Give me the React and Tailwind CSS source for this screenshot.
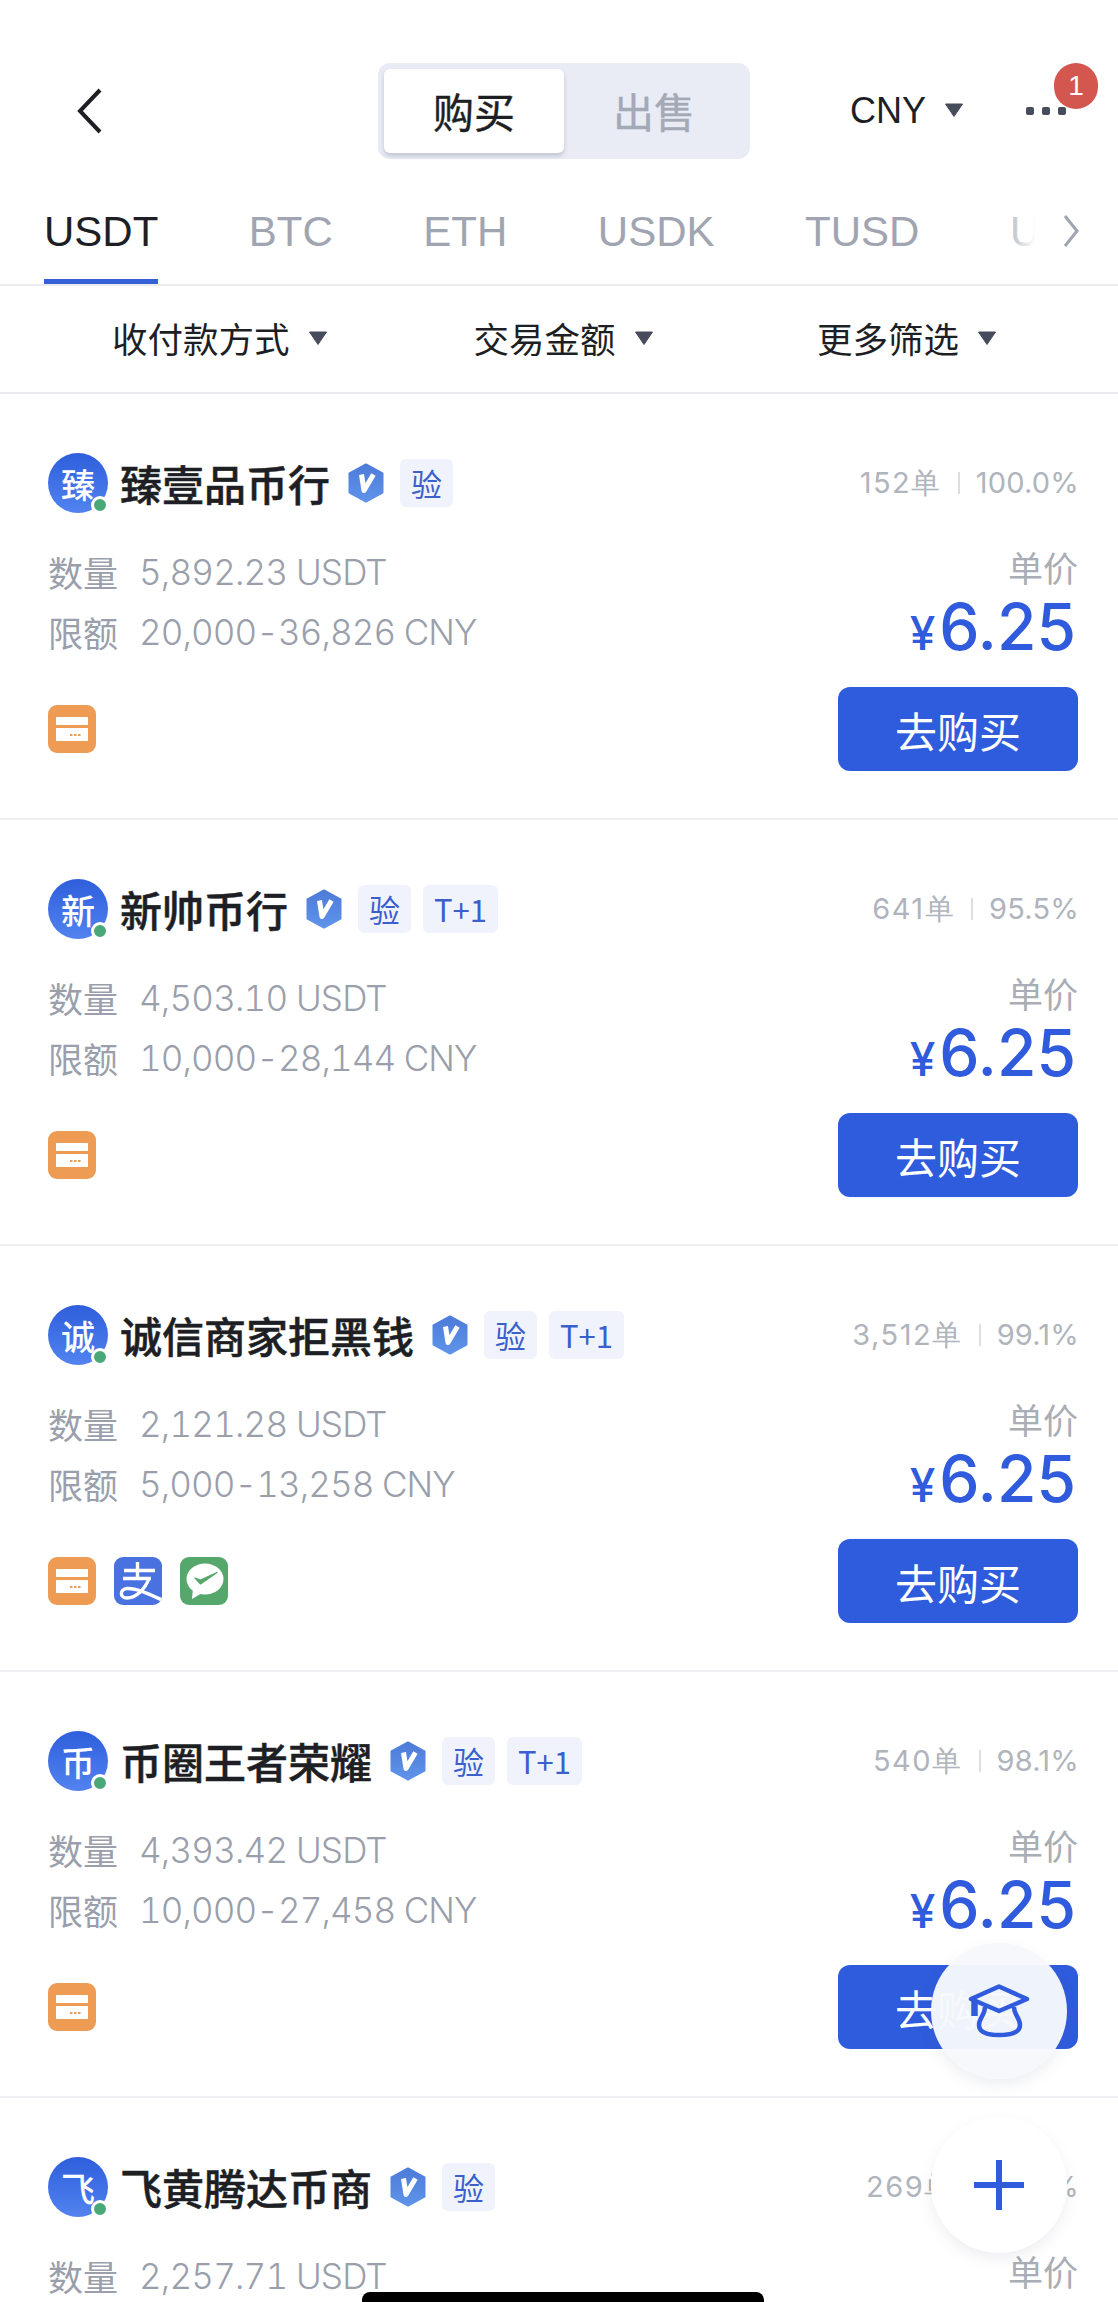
import React from 'react';

const merchants = [
  { name: '臻壹品币行', orders: '152单', rate: '100.0%', qty: '5,892.23 USDT', limit: '20,000-36,826 CNY', tags: ['验'], pays: ['bank'] },
  { name: '新帅币行', orders: '641单', rate: '95.5%', qty: '4,503.10 USDT', limit: '10,000-28,144 CNY', tags: ['验', 'T+1'], pays: ['bank'] },
  { name: '诚信商家拒黑钱', orders: '3,512单', rate: '99.1%', qty: '2,121.28 USDT', limit: '5,000-13,258 CNY', tags: ['验', 'T+1'], pays: ['bank', 'alipay', 'wechat'] },
  { name: '币圈王者荣耀', orders: '540单', rate: '98.1%', qty: '4,393.42 USDT', limit: '10,000-27,458 CNY', tags: ['验', 'T+1'], pays: ['bank'] },
  { name: '飞黄腾达币商', orders: '269单', rate: '99.6%', qty: '2,257.71 USDT', limit: '5,000-14,110 CNY', tags: ['验'], pays: ['bank'] },
];

const Caret = () => (
  <svg width="20" height="14" viewBox="0 0 20 14" className="shrink-0">
    <path d="M1.5 1h17L10 13.5z" fill="#474c5c" stroke="#474c5c" strokeWidth="1" strokeLinejoin="round" />
  </svg>
);

const VBadge = () => (
  <svg width="36" height="40" viewBox="0 0 36 40" className="shrink-0">
    <defs>
      <linearGradient id="vb" x1="0" y1="0" x2="0" y2="1">
        <stop offset="0" stopColor="#4d7bd9" />
        <stop offset="1" stopColor="#5f94ea" />
      </linearGradient>
    </defs>
    <path d="M18 1.5 34.5 10.5V29.5L18 38.5 1.5 29.5V10.5Z" fill="url(#vb)" stroke="url(#vb)" strokeWidth="2" strokeLinejoin="round" />
    <path d="M13.5 11.5 16 27.5 25.5 11.5" fill="none" stroke="#fff" strokeWidth="5" strokeLinejoin="round" />
  </svg>
);

const PayIcon = ({ type }) => {
  if (type === 'alipay') {
    return (
      <svg width="48" height="48" viewBox="0 0 48 48">
        <defs>
          <clipPath id="pc"><rect width="48" height="48" rx="9" /></clipPath>
        </defs>
        <rect width="48" height="48" rx="9" fill="#4a71e0" />
        <g fill="none" stroke="#fff" strokeWidth="3.4" clipPath="url(#pc)">
          <path d="M10 13.5H41" />
          <path d="M23.5 5V20" />
          <path d="M9 21.5H37" />
          <path d="M35 21.5C31 32 22 41 13 41 5.5 41 5.5 32 13 31.5 23 31 35 37 48 43" />
        </g>
      </svg>
    );
  }
  if (type === 'wechat') {
    return (
      <svg width="48" height="48" viewBox="0 0 48 48">
        <rect width="48" height="48" rx="9" fill="#56a76c" />
        <ellipse cx="25" cy="22" rx="18.5" ry="15.5" fill="#fff" />
        <path d="M13 31 12 42 22 36z" fill="#fff" />
        <path d="M15 21 20.5 27 37 15.5 20.5 23z" fill="#56a76c" stroke="#56a76c" strokeWidth="1.2" strokeLinejoin="round" />
      </svg>
    );
  }
  return (
    <svg width="48" height="48" viewBox="0 0 48 48">
      <rect width="48" height="48" rx="9" fill="#ee9b54" />
      <rect x="8" y="12" width="32" height="8" fill="#fff" />
      <rect x="8" y="23" width="32" height="13" fill="#fff" />
      <path d="M22 30h2.5M26 30h2.5M30 30h2.5" stroke="#ee9b54" strokeWidth="2" />
    </svg>
  );
};

const Row = ({ m }) => (
  <div className="box-border flex h-[426px] justify-between border-b-2 border-[#eff0f3] pt-[59px] pr-[40px] pl-[48px]">
    <div>
      <div className="flex h-[60px] items-center">
        <div className="relative flex h-[60px] w-[60px] shrink-0 items-center justify-center rounded-full bg-gradient-to-b from-[#2f5edb] to-[#5283f0] text-[34px] font-medium text-white">
          {m.name[0]}
          <span className="absolute right-[-1px] bottom-[-1px] h-[18px] w-[18px] rounded-full border-[3px] border-white bg-[#4aa878]" />
        </div>
        <div className="ml-[12px] text-[42px] leading-none font-medium whitespace-nowrap text-[#1d1f24] [-webkit-text-stroke:0.5px_#1d1f24]">{m.name}</div>
        <div className="ml-[18px]"><VBadge /></div>
        <div className="ml-[16px] flex gap-[12px]">
          {m.tags.map((t) => (
            <span key={t} className="flex h-[48px] items-center rounded-[6px] bg-[#f0f3fb] px-[11px] text-[31px] text-[#3b5fcb]">{t}</span>
          ))}
        </div>
      </div>
      <div className="mt-[29px] flex h-[60px] items-center text-[35px] text-[#9a9fab]">
        <span>数量</span>
        <span className="ml-[21px] font-['Inter'] font-light tracking-[-0.8px] tabular-nums">{m.qty}</span>
      </div>
      <div className="flex h-[60px] items-center text-[35px] text-[#9a9fab]">
        <span>限额</span>
        <span className="ml-[21px] font-['Inter'] font-light tracking-[-0.9px] tabular-nums">{m.limit}</span>
      </div>
      <div className="mt-[43px] flex gap-[18px]">
        {m.pays.map((p) => <PayIcon key={p} type={p} />)}
      </div>
    </div>
    <div className="flex w-[240px] shrink-0 flex-col items-end">
      <div className="mr-[-1px] flex h-[60px] items-center text-[29px] whitespace-nowrap text-[#b0b4bc]">
        <span className="font-['Inter'] tracking-[1.5px]">{m.orders}</span>
        <span className="mx-[16px] h-[22px] w-[2px] bg-[#dcdee3]" />
        <span className="font-['Inter'] tracking-[0.2px]">{m.rate}</span>
      </div>
      <div className="mt-[37px] text-[35px] leading-[34px] text-[#a9adb5]">单价</div>
      <div className="mt-[11px] flex h-[64px] items-baseline pr-[2px] font-['Inter'] leading-[64px] font-medium text-[#2f5bdc]">
        <span className="mr-[4px] text-[46px]">¥</span>
        <span className="text-[64px]">6.25</span>
      </div>
      <button className="mt-[28px] h-[84px] w-[240px] rounded-[12px] bg-[#2f5bdd] text-[42px] text-white">去购买</button>
    </div>
  </div>
);

export default function App() {
  return (
    <div className="relative h-[2302px] w-[1118px] overflow-hidden bg-white font-['Noto_Sans_CJK_SC','Liberation_Sans',sans-serif]">
      {/* top bar */}
      <div className="flex h-[159px] items-start pt-[63px]">
        <svg width="25" height="46" viewBox="0 0 25 46" className="mt-[25px] ml-[77px]">
          <path d="M23 2 3 23 23 44" fill="none" stroke="#1d1f24" strokeWidth="4" />
        </svg>
        <div className="ml-[276px] box-border flex h-[96px] w-[372px] rounded-[12px] bg-[#e9ecf5] p-[6px]">
          <div className="flex h-[84px] w-[180px] items-center justify-center rounded-[6px] bg-white text-[41px] text-[#1d1f24] shadow-[0_3px_4px_rgba(120,130,150,0.35)] [-webkit-text-stroke:0.4px_#1d1f24]">购买</div>
          <div className="flex h-[84px] flex-1 items-center justify-center text-[41px] text-[#a4a9b6] [-webkit-text-stroke:0.4px_#a4a9b6]">出售</div>
        </div>
        <div className="mt-[28px] ml-[100px] flex h-[40px] items-center font-['Liberation_Sans',sans-serif] text-[36px] text-[#1d1f24]">CNY</div>
        <div className="mt-[40px] ml-[18px]"><Caret /></div>
        <div className="relative mt-[44px] ml-[62px] flex gap-[8px]">
          <span className="h-[8px] w-[8px] rounded-[2px] bg-[#474c5c]" />
          <span className="h-[8px] w-[8px] rounded-[2px] bg-[#474c5c]" />
          <span className="h-[8px] w-[8px] rounded-[2px] bg-[#474c5c]" />
          <span className="absolute top-[-44px] left-[28px] flex h-[46px] w-[44px] items-center justify-center rounded-full bg-[#d4574f] font-['Liberation_Sans',sans-serif] text-[28px] text-white">1</span>
        </div>
      </div>

      {/* coin tabs */}
      <div className="relative flex h-[127px] gap-[90.5px] overflow-hidden border-b-2 border-[#e9ebef] pl-[44px] font-['Liberation_Sans',sans-serif] text-[42px] leading-[42px] whitespace-nowrap text-[#a0a5b1]">
        <div className="box-border h-[125px] shrink-0 border-b-[5px] border-[#3560d8] pt-[52px] text-[#1d1f24]">USDT</div>
        <div className="shrink-0 pt-[52px]">BTC</div>
        <div className="shrink-0 pt-[52px]">ETH</div>
        <div className="shrink-0 pt-[52px]">USDK</div>
        <div className="shrink-0 pt-[52px]">TUSD</div>
        <div className="shrink-0 pt-[52px]">USDC</div>
        <div className="absolute top-0 right-0 flex h-[123px] w-[118px] items-start justify-end bg-gradient-to-r from-white/0 via-white via-30% to-white pt-[56px] pr-[39px]">
          <svg width="16" height="32" viewBox="0 0 16 32">
            <path d="M2 1 14 16 2 31" fill="none" stroke="#a0a5b1" strokeWidth="3" />
          </svg>
        </div>
      </div>

      {/* filters */}
      <div className="box-border flex h-[108px] border-b-2 border-[#e9ebef] pb-[2px] pl-[112px] text-[35.5px] text-[#1d1f24]">
        <div className="flex items-center gap-[18px]">
          <span>收付款方式</span>
          <Caret />
        </div>
        <div className="ml-[146px] flex items-center gap-[18px]">
          <span>交易金额</span>
          <Caret />
        </div>
        <div className="ml-[163.5px] flex items-center gap-[18px]">
          <span>更多筛选</span>
          <Caret />
        </div>
      </div>

      {merchants.map((m) => <Row key={m.name} m={m} />)}

      {/* floating buttons */}
      <div className="absolute top-[1943px] left-[931px] flex h-[136px] w-[136px] items-center justify-center rounded-full bg-[#f6f8fc]/97 shadow-[0_6px_14px_rgba(90,100,130,0.1)]">
        <svg width="62" height="54" viewBox="0 0 62 54" fill="none" stroke="#2f5bdc" strokeWidth="4.5" strokeLinejoin="round">
          <path d="M31 2.5 59 15 31 27 3 15Z" />
          <path d="M17 23C17 31 11 34 11 41 11 49 21 51 31 51S52 49 52 41C52 34 46 31 46 23" />
          <path d="M6.5 17V32" strokeWidth="6.5" />
        </svg>
      </div>
      <div className="absolute top-[2117px] left-[931px] flex h-[136px] w-[136px] items-center justify-center rounded-full bg-white shadow-[0_6px_14px_rgba(90,100,130,0.1)]">
        <svg width="50" height="50" viewBox="0 0 50 50">
          <path d="M25 0V50M0 25H50" stroke="#2f5bdc" strokeWidth="6" />
        </svg>
      </div>

      {/* home indicator */}
      <div className="absolute top-[2292px] left-[362px] h-[10px] w-[402px] rounded-t-[8px] bg-black" />
    </div>
  );
}
